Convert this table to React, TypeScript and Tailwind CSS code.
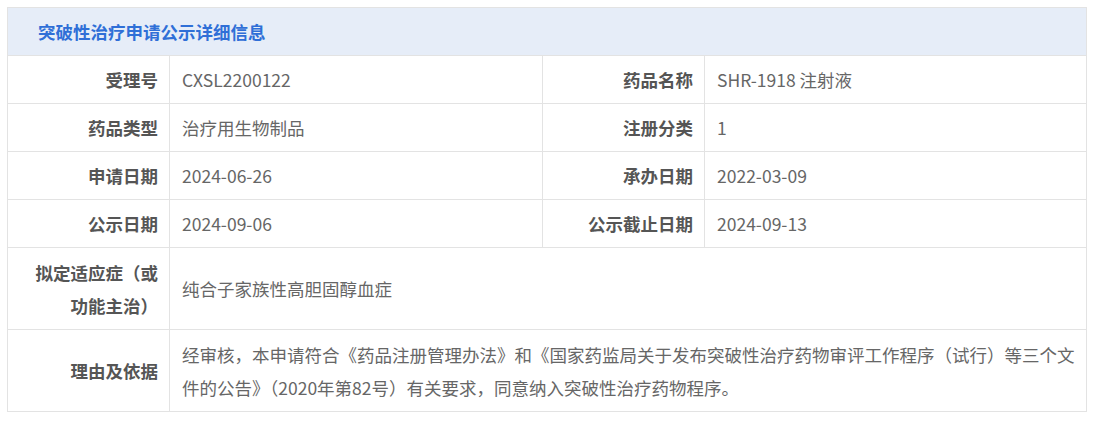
const rows: [string, string, string, string][] = [
  ['受理号', 'CXSL2200122', '药品名称', 'SHR-1918 注射液'],
  ['药品类型', '治疗用生物制品', '注册分类', '1'],
  ['申请日期', '2024-06-26', '承办日期', '2022-03-09'],
  ['公示日期', '2024-09-06', '公示截止日期', '2024-09-13'],
];

const labelCls =
  'w-[162px] border border-[#e3e3e3] pr-[11px] py-[7.5px] text-right align-middle font-bold text-[#555555]';
const valueCls = 'border border-[#e3e3e3] pl-3 pr-2 py-[7.5px] align-middle text-[#666666]';

export default function App() {
  return (
    <div className="bg-white px-[7px] pt-[7px] font-['Noto_Sans_CJK_SC','Noto_Sans',sans-serif] text-[17.5px] leading-8">
      <table className="w-[1080px] table-fixed border-collapse">
        <colgroup>
          <col className="w-[162px]" />
          <col className="w-[373px]" />
          <col className="w-[162px]" />
          <col />
        </colgroup>
        <tbody>
          <tr>
            <td
              colSpan={4}
              className="h-[48px] border border-[#e3e3e3] bg-[#e6edf8] pl-[30px] font-bold text-[#2f6fd7]"
            >
              突破性治疗申请公示详细信息
            </td>
          </tr>
          {rows.map((r) => (
            <tr key={r[0]}>
              <td className={labelCls}>{r[0]}</td>
              <td className={valueCls}>{r[1]}</td>
              <td className={labelCls}>{r[2]}</td>
              <td className={valueCls}>{r[3]}</td>
            </tr>
          ))}
          <tr>
            <td className={labelCls + ' leading-[33px]'}>
              拟定适应症（或
              <br />
              功能主治）
            </td>
            <td colSpan={3} className={valueCls}>
              纯合子家族性高胆固醇血症
            </td>
          </tr>
          <tr>
            <td className={labelCls}>理由及依据</td>
            <td colSpan={3} className={valueCls + ' leading-[33px]'}>
              经审核，本申请符合《药品注册管理办法》和《国家药监局关于发布突破性治疗药物审评工作程序（试行）等三个文件的公告》（2020年第82号）有关要求，同意纳入突破性治疗药物程序。
            </td>
          </tr>
        </tbody>
      </table>
    </div>
  );
}
